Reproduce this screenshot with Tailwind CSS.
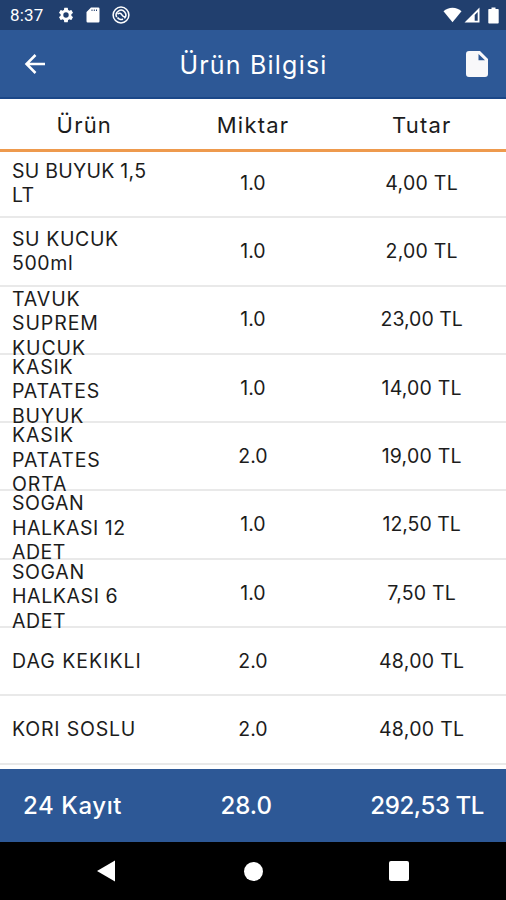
<!DOCTYPE html>
<html lang="tr">

<head>
    <meta charset="UTF-8">
    <meta name="viewport" content="width=device-width, initial-scale=1.0">
    <script src="https://cdn.jsdelivr.net/npm/@tailwindcss/browser@4"></script>
    <title>Ürün Bilgisi</title>
</head>

<body class="bg-white font-['Inter','Liberation_Sans',sans-serif] text-[#1c1c1c]">
    <div class="flex flex-col w-[506px] h-[900px] overflow-hidden">
        <!-- Status bar -->
        <div class="flex items-center h-[30px] shrink-0 bg-[#213f6e] text-white pl-[10px] pr-[7px]">
            <span class="font-['Roboto',sans-serif] text-[17px] w-[48px] tracking-[0.2px] pt-[1px]">8:37</span>
            <svg class="w-[18px] h-[18px] -ml-[1px]" viewBox="0 0 24 24" fill="currentColor">
                <path d="M19.14 12.94c.04-.3.06-.61.06-.94 0-.32-.02-.64-.07-.94l2.03-1.58a.49.49 0 0 0 .12-.61l-1.92-3.32a.49.49 0 0 0-.59-.22l-2.39.96a7 7 0 0 0-1.62-.94l-.36-2.54a.48.48 0 0 0-.48-.41h-3.84a.47.47 0 0 0-.47.41l-.36 2.54c-.59.24-1.13.57-1.62.94l-2.39-.96a.48.48 0 0 0-.59.22L2.74 8.87a.48.48 0 0 0 .12.61l2.03 1.58c-.05.3-.09.63-.09.94s.02.64.07.94l-2.03 1.58a.49.49 0 0 0-.12.61l1.92 3.32c.12.22.37.29.59.22l2.39-.96c.5.38 1.03.7 1.62.94l.36 2.54c.05.24.24.41.48.41h3.84c.24 0 .44-.17.47-.41l.36-2.54a6.8 6.8 0 0 0 1.62-.94l2.39.96c.22.08.47 0 .59-.22l1.92-3.32a.48.48 0 0 0-.12-.61zM12 15.6A3.6 3.6 0 1 1 12 8.4a3.6 3.6 0 0 1 0 7.2z" />
            </svg>
            <svg class="w-[14px] h-[16px] ml-[11px]" viewBox="0 0 14 16" fill="currentColor">
                <path fill-rule="evenodd" d="M5 .5h7.300a1.200 1.200 0 0 1 1.200 1.200v12.600a1.200 1.200 0 0 1-1.200 1.200H1.700a1.200 1.200 0 0 1-1.200-1.200V5zM5.500 2.500v1.500h1v-1.500zM7.800 2.500v1.500h1v-1.500zM10 2.500v1.500h1v-1.500z" />
            </svg>
            <svg class="w-[18px] h-[18px] ml-[12px]" viewBox="0 0 18 18" fill="none" stroke="currentColor">
                <circle cx="9" cy="9" r="7.900" stroke-width="1.500" />
                <path d="M4.700 11.200a4.800 4.800 0 1 1 7.700 1.200" stroke-width="1.500" />
                <path d="M5.500 8c1.700-1.300 3.300-.8 4.200.7s1.800 2.300 3.300 2.300M5.500 11.500c1 1.700 3.500 2.500 5.500 1.500" stroke-width="1.600" />
            </svg>
            <svg class="w-[19px] h-[16px] ml-auto" viewBox="0 0 19 16" fill="currentColor">
                <path d="M9.500 15.300.5 4.300C3 2 6 .7 9.500.7s6.500 1.300 9 3.600z" />
            </svg>
            <svg class="w-[16px] h-[16px] ml-[2px]" viewBox="0 0 16 16" fill="currentColor">
                <path fill-rule="evenodd" d="M15.500.500v15H.5zM13.700 5v8.700h-3v-5.700z" />
            </svg>
            <svg class="w-[11px] h-[17px] ml-[8px]" viewBox="0 0 11 17" fill="currentColor">
                <path d="M3.500.500h4v1.500H10a.7.700 0 0 1 .7.700v13a.8.800 0 0 1-.8.800H1.100a.8.800 0 0 1-.8-.8v-13A.7.700 0 0 1 1 2h2.500z" />
            </svg>
        </div>

        <!-- App bar -->
        <div class="flex items-center justify-between h-[69px] shrink-0 bg-[#2d5896] border-b-2 border-[#1b4788] text-white pl-[24px] pr-[18px]">
            <svg class="w-[22px] h-[20px]" viewBox="0 0 22 20" fill="none" stroke="currentColor" stroke-width="2.500">
                <path d="M21 10H3M11.500 1 2.500 10l9 9" />
            </svg>
            <h1 class="text-[25px] leading-[30px] tracking-[1.2px] pt-[2px] -ml-[5px]">Ürün Bilgisi</h1>
            <svg class="w-[22px] h-[26px]" viewBox="0 0 22 26" fill="#f8f8fa">
                <path fill-rule="evenodd" d="M3 0h11l8 8v15a3 3 0 0 1-3 3H3a3 3 0 0 1-3-3V3a3 3 0 0 1 3-3zM12.500 3v6.200H19z" />
            </svg>
        </div>

        <!-- Column titles -->
        <div class="relative z-10 grid grid-cols-3 items-center h-[53px] shrink-0 border-b-3 border-[#ee9a4d] pt-[2px] text-center text-[22px] tracking-[1.2px]">
            <div>Ürün</div>
            <div>Miktar</div>
            <div>Tutar</div>
        </div>

        <!-- Rows -->
        <div class="-mt-[2px] flex-1 overflow-hidden text-[19.500px] leading-[24.500px]">
            <div class="grid grid-cols-3 h-[68.300px] items-center border-b-2 border-[#e9e9e9]">
                <div class="pl-[12px] tracking-[0.25px]">SU BUYUK 1,5<br>LT</div>
                <div class="text-center">1.0</div>
                <div class="text-center tracking-[0.3px]">4,00 TL</div>
            </div>
            <div class="grid grid-cols-3 h-[68.300px] items-center border-b-2 border-[#e9e9e9]">
                <div class="pl-[12px] tracking-[0.6px]">SU KUCUK<br>500ml</div>
                <div class="text-center">1.0</div>
                <div class="text-center tracking-[0.2px]">2,00 TL</div>
            </div>
            <div class="grid grid-cols-3 h-[68.300px] grid-rows-[66.300px] items-center border-b-2 border-[#e9e9e9]">
                <div class="pl-[12px] self-start h-[68px] overflow-hidden tracking-[0.9px]">TAVUK<br>SUPREM<br>KUCUK</div>
                <div class="text-center">1.0</div>
                <div class="text-center">23,00 TL</div>
            </div>
            <div class="grid grid-cols-3 h-[68.300px] grid-rows-[66.300px] items-center border-b-2 border-[#e9e9e9]">
                <div class="pl-[12px] self-start h-[68px] overflow-hidden tracking-[0.8px]">KASIK<br>PATATES<br>BUYUK</div>
                <div class="text-center">1.0</div>
                <div class="text-center tracking-[0.2px]">14,00 TL</div>
            </div>
            <div class="grid grid-cols-3 h-[68.300px] grid-rows-[66.300px] items-center border-b-2 border-[#e9e9e9]">
                <div class="pl-[12px] self-start h-[68px] overflow-hidden tracking-[0.9px]">KASIK<br>PATATES<br>ORTA</div>
                <div class="text-center">2.0</div>
                <div class="text-center tracking-[0.2px]">19,00 TL</div>
            </div>
            <div class="grid grid-cols-3 h-[68.300px] grid-rows-[66.300px] items-center border-b-2 border-[#e9e9e9]">
                <div class="pl-[12px] self-start h-[68px] overflow-hidden tracking-[0.5px]">SOGAN<br>HALKASI 12<br>ADET</div>
                <div class="text-center">1.0</div>
                <div class="text-center">12,50 TL</div>
            </div>
            <div class="grid grid-cols-3 h-[68.300px] grid-rows-[66.300px] items-center border-b-2 border-[#e9e9e9]">
                <div class="pl-[12px] self-start h-[68px] overflow-hidden tracking-[0.6px]">SOGAN<br>HALKASI 6<br>ADET</div>
                <div class="text-center">1.0</div>
                <div class="text-center tracking-[0.2px]">7,50 TL</div>
            </div>
            <div class="grid grid-cols-3 h-[68.300px] items-center border-b-2 border-[#e9e9e9]">
                <div class="pl-[12px] tracking-[1px]">DAG KEKIKLI</div>
                <div class="text-center">2.0</div>
                <div class="text-center tracking-[0.3px]">48,00 TL</div>
            </div>
            <div class="grid grid-cols-3 h-[68.300px] items-center border-b-2 border-[#e9e9e9]">
                <div class="pl-[12px] tracking-[0.8px]">KORI SOSLU</div>
                <div class="text-center">2.0</div>
                <div class="text-center tracking-[0.3px]">48,00 TL</div>
            </div>
        </div>

        <!-- Totals -->
        <div class="flex items-center justify-between h-[73px] shrink-0 bg-[#2d5896] text-white text-[24px] font-medium pl-[23px] pr-[22px]">
            <div class="tracking-[0.6px]">24 Kayıt</div>
            <div>28.0</div>
            <div class="-tracking-[0.4px]">292,53 TL</div>
        </div>

        <!-- Navigation bar -->
        <div class="flex items-center h-[58px] shrink-0 bg-black text-white pl-[97px]">
            <svg class="w-[18px] h-[22px]" viewBox="0 0 18 22" fill="currentColor">
                <path d="M18 .500v21L0 11z" />
            </svg>
            <div class="size-[19px] ml-[129px] rounded-full bg-white"></div>
            <div class="size-[20px] ml-[126px] rounded-[2px] bg-white"></div>
        </div>
    </div>
</body>

</html>
